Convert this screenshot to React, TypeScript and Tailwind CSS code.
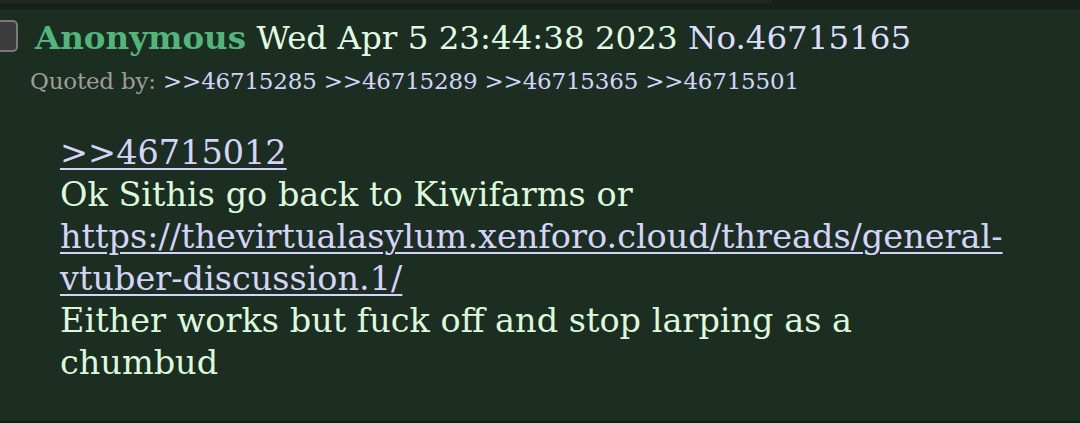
const quotes = ["46715285", "46715289", "46715365", "46715501"];

export default function App() {
  return (
    <div className="h-[423px] w-[1080px] overflow-hidden bg-[#1c2d21] font-['DejaVu_Serif',serif] flex flex-col">
      <div className="h-[10px] bg-[#16211a] shrink-0">
        <div className="h-[3px] w-[772px] bg-[#1c2a20]" />
      </div>
      <div className="flex-1 flex flex-col">
        <div className="flex items-center h-[44px] mt-[6px]">
          <div className="ml-[-8px] mt-[-4px] w-[26px] h-[32px] rounded-[5px] border-2 border-[#7a7a7a] bg-[#3c3c3c] shrink-0" />
          <div className="ml-[17px] text-[32.5px] leading-none whitespace-nowrap">
            <span className="font-bold text-[#52b67c]">Anonymous</span>{" "}
            <span className="text-[#e0fde2]">Wed Apr 5 23:44:38 2023</span>{" "}
            <span className="text-[#dcdcfc]">No.46715165</span>
          </div>
        </div>
        <div className="ml-[30px] mt-[6px] text-[23px] leading-[30px] tracking-[-0.2px] whitespace-nowrap">
          <span className="text-[#9e9e99]">Quoted by: </span>
          {quotes.map((q, i) => (
            <span key={q} className="text-[#d4d4fa]">
              &gt;&gt;{q}
              {i < quotes.length - 1 ? " " : ""}
            </span>
          ))}
        </div>
        <div className="ml-[60px] mt-[36px] w-[990px] text-[33.5px] leading-[42px] text-[#dcf9dc] whitespace-nowrap">
          <a className="text-[#d4d4fa] underline underline-offset-[4px] decoration-2">&gt;&gt;46715012</a>
          <br />
          Ok Sithis go back to Kiwifarms or
          <br />
          <a className="text-[#d4d4fa] underline underline-offset-[4px] decoration-2">
            https://thevirtualasylum.xenforo.cloud/threads/general-
            <br />
            vtuber-discussion.1/
          </a>
          <br />
          Either works but fuck off and stop larping as a
          <br />
          chumbud
        </div>
      </div>
      <div className="h-[2px] bg-[#141c16] shrink-0" />
    </div>
  );
}
